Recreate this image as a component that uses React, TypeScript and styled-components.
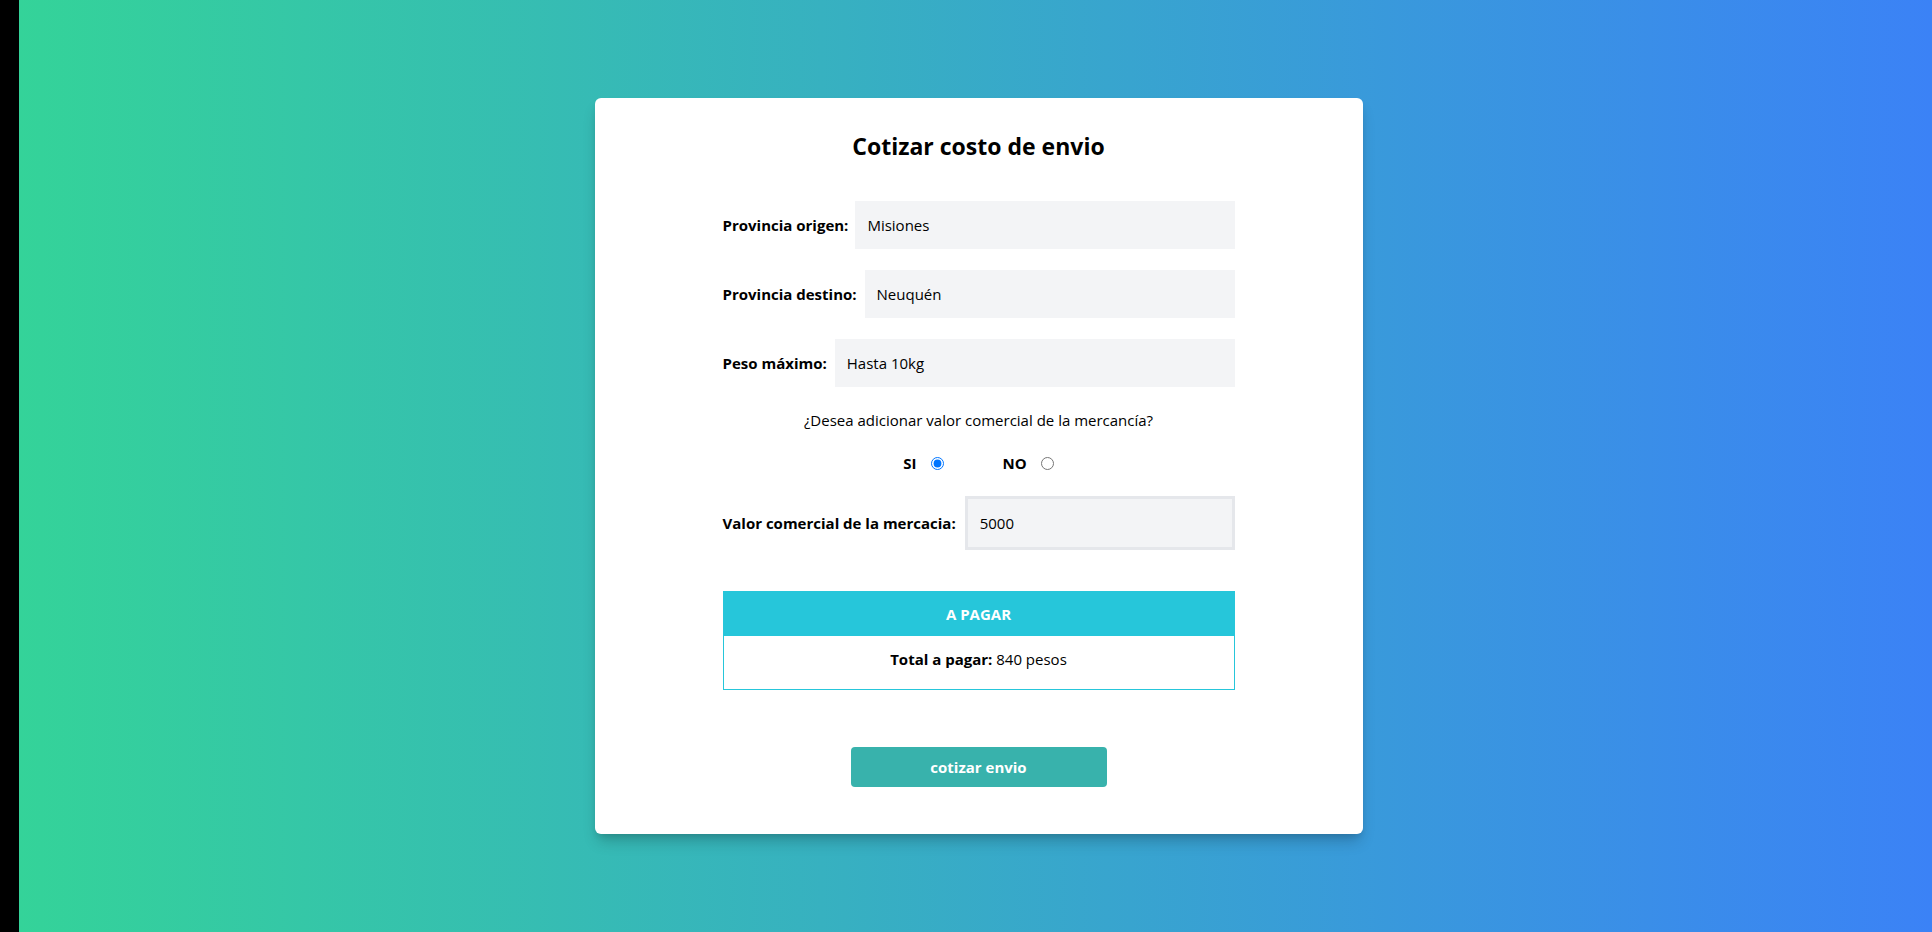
import React, { useState } from 'react';
import styled, { createGlobalStyle } from 'styled-components';

const GlobalStyle = createGlobalStyle`
  html, body {
    margin: 0;
    padding: 0;
  }

  body {
    font-family: 'Open Sans', 'Noto Sans', sans-serif;
    color: #000;
  }

  * {
    box-sizing: border-box;
  }
`;

// Layout
const Page = styled.div`
  display: flex;
  min-height: 100vh;
`;

const SideStrip = styled.div`
  width: 19px;
  flex-shrink: 0;
  background-color: #000;
`;

const Main = styled.main`
  flex: 1;
  display: flex;
  align-items: center;
  justify-content: center;
  padding-left: 6px;
  background: linear-gradient(to right, #34d399, #3b82f6);
`;

const Card = styled.div`
  width: 768px;
  background-color: #fff;
  border-radius: 6px;
  padding: 32px 0 47px;
  box-shadow: 0 10px 15px -3px rgba(0, 0, 0, 0.2), 0 4px 6px -2px rgba(0, 0, 0, 0.1);
`;

const Title = styled.h2`
  margin: 0 0 39px;
  text-align: center;
  font-size: 23px;
  line-height: 32px;
  font-weight: 700;
`;

const Form = styled.form`
  width: 512px;
  margin: 0 auto;
`;

const Field = styled.div`
  display: flex;
  align-items: center;
  margin-bottom: 21px;
`;

const Label = styled.label<{ $gap?: number }>`
  font-size: 15px;
  font-weight: 700;
  white-space: nowrap;
  margin-right: ${(p) => p.$gap ?? 7}px;
`;

const Input = styled.input<{ $framed?: boolean }>`
  flex: 1;
  min-width: 0;
  height: ${(p) => (p.$framed ? 54 : 48)}px;
  padding: 0 12px;
  border: ${(p) => (p.$framed ? '3px solid #e5e7eb' : 'none')};
  background-color: #f3f4f6;
  font-family: inherit;
  font-size: 15px;
  color: #000;
  outline: none;
`;

const Question = styled.p`
  margin: 0;
  text-align: center;
  font-size: 15px;
  line-height: 24px;
`;

const RadioRow = styled.div`
  display: flex;
  justify-content: center;
  gap: 59px;
  margin: 19px 0 21px;
  line-height: 24px;
`;

const RadioOption = styled.label`
  display: flex;
  align-items: center;
  gap: 14px;
  font-weight: 700;
  font-size: 15px;
  cursor: pointer;
`;

const Radio = styled.input`
  margin: 0;
  width: 13px;
  height: 13px;
`;

const ResultBox = styled.div`
  margin-top: 41px;
  border: 1px solid #26c6da;
`;

const ResultHeader = styled.div`
  padding: 10px 0;
  background-color: #26c6da;
  color: #fff;
  text-align: center;
  font-weight: 700;
  font-size: 15px;
  line-height: 24px;
`;

const ResultBody = styled.p`
  margin: 0;
  padding: 11px 16px 18px;
  text-align: center;
  font-size: 15px;
  line-height: 24px;
`;

const SubmitButton = styled.button`
  display: block;
  width: 256px;
  height: 40px;
  margin: 57px auto 0;
  border: none;
  border-radius: 4px;
  background-color: #38b2ac;
  color: #fff;
  font-family: inherit;
  font-size: 15px;
  font-weight: 700;
  cursor: pointer;

  &:hover {
    background-color: #319795;
  }
`;

const App: React.FC = () => {
  const [origen, setOrigen] = useState('Misiones');
  const [destino, setDestino] = useState('Neuquén');
  const [peso, setPeso] = useState('Hasta 10kg');
  const [adicionar, setAdicionar] = useState(true);
  const [valor, setValor] = useState('5000');

  return (
    <Page>
      <GlobalStyle />
      <SideStrip />
      <Main>
        <Card>
          <Title>Cotizar costo de envio</Title>
          <Form onSubmit={(e) => e.preventDefault()}>
            <Field>
              <Label htmlFor="origen">Provincia origen:</Label>
              <Input id="origen" value={origen} onChange={(e) => setOrigen(e.target.value)} />
            </Field>
            <Field>
              <Label htmlFor="destino" $gap={8}>Provincia destino:</Label>
              <Input id="destino" value={destino} onChange={(e) => setDestino(e.target.value)} />
            </Field>
            <Field>
              <Label htmlFor="peso" $gap={8}>Peso máximo:</Label>
              <Input id="peso" value={peso} onChange={(e) => setPeso(e.target.value)} />
            </Field>

            <Question>¿Desea adicionar valor comercial de la mercancía?</Question>
            <RadioRow>
              <RadioOption>
                SI
                <Radio
                  type="radio"
                  name="adicionar"
                  checked={adicionar}
                  onChange={() => setAdicionar(true)}
                />
              </RadioOption>
              <RadioOption>
                NO
                <Radio
                  type="radio"
                  name="adicionar"
                  checked={!adicionar}
                  onChange={() => setAdicionar(false)}
                />
              </RadioOption>
            </RadioRow>

            {adicionar && (
              <Field>
                <Label htmlFor="valor" $gap={9}>Valor comercial de la mercacia:</Label>
                <Input
                  id="valor"
                  $framed
                  value={valor}
                  onChange={(e) => setValor(e.target.value)}
                />
              </Field>
            )}

            <ResultBox>
              <ResultHeader>A PAGAR</ResultHeader>
              <ResultBody>
                <b>Total a pagar:</b> 840 pesos
              </ResultBody>
            </ResultBox>

            <SubmitButton type="submit">cotizar envio</SubmitButton>
          </Form>
        </Card>
      </Main>
    </Page>
  );
};

export default App;
